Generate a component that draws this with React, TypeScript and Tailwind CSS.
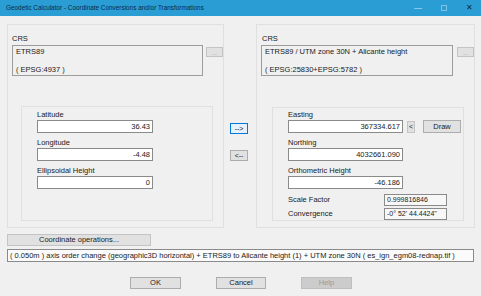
import React from "react";

const font = { fontFamily: '"Liberation Sans", Arial, sans-serif' };

function Field({ label, value, w = "w-[116px]" }: { label: string; value: string; w?: string }) {
  return (
    <div className="flex flex-col">
      <div className="h-[10px] leading-[10px] text-[7.5px] text-[#1a1a1a]">{label}</div>
      <div className={`${w} h-[13px] bg-white border border-[#8a8a8a] flex items-center justify-end pr-[2px] text-[7.5px] text-[#1a1a1a]`}>
        {value}
      </div>
    </div>
  );
}

function CrsBox({ name, code }: { name: string; code: string }) {
  return (
    <div className="w-[193px] h-[31px] border border-[#9c9c9c] bg-[#f0f0f0] pl-[3px] pt-[1px] text-[7.5px] leading-[9px] text-[#1a1a1a]">
      <div>{name}</div>
      <div className="h-[9px]" />
      <div>{code}</div>
    </div>
  );
}

function DotsButton() {
  return (
    <div className="w-[17px] h-[10px] mt-[2px] bg-[#e1e1e1] border border-[#c4c4c4] text-[6px] leading-[6px] text-[#9a9a9a] flex items-end justify-center">
      ...
    </div>
  );
}

export default function App() {
  return (
    <div className="w-[481px] h-[296px] bg-[#f0f0f0] overflow-hidden" style={font}>
      {/* title bar */}
      <div className="h-[16px] bg-[#2a9dd5] flex items-center pl-[6px] text-[6.4px] text-[#0d2b45]">
        <span className="flex-1">Geodetic Calculator - Coordinate Conversions and/or Transformations</span>
        <span className="w-[26px] text-center text-[#cfe8f5] text-[8px]">—</span>
        <span className="w-[26px] flex justify-center">
          <span className="w-[6px] h-[6px] border border-[#7fc2e6]" />
        </span>
        <span className="w-[24px] text-center text-[#0d2b45] text-[8px]">✕</span>
      </div>

      {/* panels */}
      <div className="flex pt-[8px] pl-[7px]">
        {/* source */}
        <div className="w-[217px] h-[204px] border border-[#e0e0e0] pl-[4px] pt-[8px]">
          <div className="h-[12px] text-[7.5px] text-[#1a1a1a]">CRS</div>
          <div className="flex">
            <CrsBox name="ETRS89" code="( EPSG:4937 )" />
            <div className="ml-[3px]">
              <DotsButton />
            </div>
          </div>
          <div className="ml-[9px] mt-[30px] w-[192px] h-[115px] border border-[#e0e0e0] pl-[15px] pt-[3px] flex flex-col gap-[5px]">
            <Field label="Latitude" value="36.43" />
            <Field label="Longitude" value="-4.48" />
            <Field label="Ellipsoidal Height" value="0" />
          </div>
        </div>

        {/* arrows */}
        <div className="ml-[6px] w-[18px] pt-[99px] flex flex-col gap-[16px]">
          <div className="h-[11px] bg-[#e5f1fb] border border-[#0078d7] flex items-center justify-center text-[7px] leading-[7px] text-[#1a1a1a]">
            --&gt;
          </div>
          <div className="h-[11px] bg-[#e1e1e1] border border-[#adadad] flex items-center justify-center text-[7px] leading-[7px] text-[#1a1a1a]">
            &lt;--
          </div>
        </div>

        {/* target */}
        <div className="ml-[8px] w-[219px] h-[204px] border border-[#e0e0e0] pl-[4px] pt-[8px]">
          <div className="h-[12px] pl-[1px] text-[7.5px] text-[#1a1a1a]">CRS</div>
          <div className="flex">
            <CrsBox name="ETRS89 / UTM zone 30N + Alicante height" code="( EPSG:25830+EPSG:5782 )" />
            <div className="ml-[4px]">
              <DotsButton />
            </div>
          </div>
          <div className="ml-[11px] mt-[31px] w-[192px] h-[114px] border border-[#e0e0e0] pl-[15px] pt-[2px] flex flex-col gap-[5px]">
            <div className="flex items-end">
              <Field label="Easting" value="367334.617" w="w-[115px]" />
              <div className="ml-[4px] w-[8px] h-[12px] bg-[#e1e1e1] border border-[#c4c4c4] flex items-center justify-center text-[7px] text-[#1a1a1a]">
                &lt;
              </div>
              <div className="ml-[8px] w-[38px] h-[13px] bg-[#e1e1e1] border border-[#adadad] flex items-center justify-center text-[7.5px] text-[#1a1a1a]">
                Draw
              </div>
            </div>
            <Field label="Northing" value="4032661.090" w="w-[115px]" />
            <Field label="Orthometric Height" value="-46.186" w="w-[115px]" />
            <div className="flex flex-col gap-[2px]">
              <div className="flex items-center">
                <span className="w-[96px] text-[7.5px] text-[#1a1a1a]">Scale Factor</span>
                <span className="w-[63px] h-[12px] bg-[#f7f7f7] border border-[#8a8a8a] pl-[2px] text-[7px] leading-[10px] text-[#1a1a1a]">
                  0.999816846
                </span>
              </div>
              <div className="flex items-center">
                <span className="w-[96px] text-[7.5px] text-[#1a1a1a]">Convergence</span>
                <span className="w-[63px] h-[12px] bg-[#f7f7f7] border border-[#8a8a8a] pl-[2px] text-[7px] leading-[10px] text-[#1a1a1a]">
                  -0° 52' 44.4424"
                </span>
              </div>
            </div>
          </div>
        </div>
      </div>

      {/* operations */}
      <div className="pl-[7px] mt-[6px] flex flex-col gap-[3px]">
        <div className="w-[144px] h-[12px] bg-[#e1e1e1] border border-[#c4c4c4] flex items-center justify-center text-[7.5px] text-[#1a1a1a]">
          Coordinate operations...
        </div>
        <div className="w-[467px] h-[13px] bg-[#fbfbfb] border border-[#8a8a8a] flex items-center pl-[2px] text-[7.5px] text-[#1a1a1a] whitespace-nowrap overflow-hidden">
          ( 0.050m ) axis order change (geographic3D horizontal) + ETRS89 to Alicante height (1) + UTM zone 30N ( es_ign_egm08-rednap.tif )
        </div>
      </div>

      {/* dialog buttons */}
      <div className="flex pl-[130px] mt-[15px] gap-[35px]">
        <div className="w-[51px] h-[12px] bg-[#e1e1e1] border border-[#adadad] flex items-center justify-center text-[7.5px] text-[#1a1a1a]">
          OK
        </div>
        <div className="w-[50px] h-[12px] bg-[#e1e1e1] border border-[#adadad] flex items-center justify-center text-[7.5px] text-[#1a1a1a]">
          Cancel
        </div>
        <div className="w-[51px] h-[12px] bg-[#cccccc] border border-[#bfbfbf] flex items-center justify-center text-[7.5px] text-[#9a9a9a]">
          Help
        </div>
      </div>
    </div>
  );
}
